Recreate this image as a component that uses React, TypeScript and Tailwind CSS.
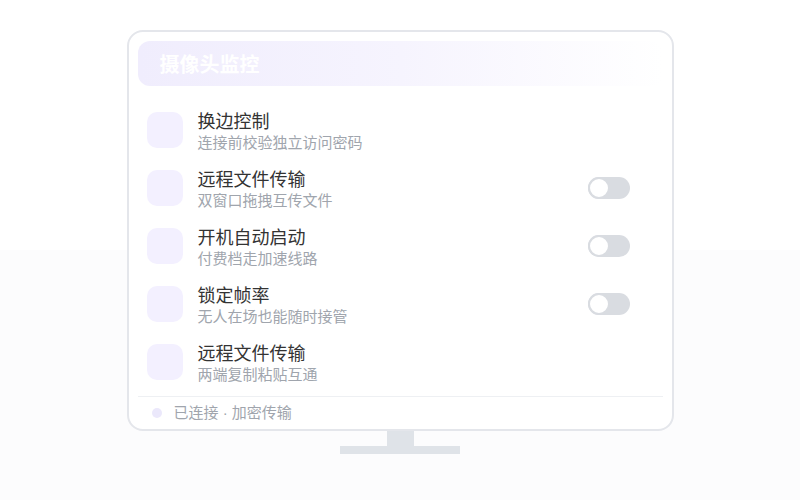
const rows = [
  { title: "换边控制", sub: "连接前校验独立访问密码", toggle: false },
  { title: "远程文件传输", sub: "双窗口拖拽互传文件", toggle: true },
  { title: "开机自动启动", sub: "付费档走加速线路", toggle: true },
  { title: "锁定帧率", sub: "无人在场也能随时接管", toggle: true },
  { title: "远程文件传输", sub: "两端复制粘贴互通", toggle: false },
];

function Toggle() {
  return (
    <div className="w-[42px] h-[22px] rounded-full bg-[#d9dce1] relative shrink-0">
      <div className="absolute left-0 top-0 w-[22px] h-[22px] rounded-full bg-white border-2 border-[#d9dce1]" />
    </div>
  );
}

export default function App() {
  return (
    <div
      className="w-[800px] h-[500px] flex flex-col items-center pt-[30px] bg-[linear-gradient(to_bottom,#ffffff_50%,#fcfcfd_50%)]"
      style={{ fontFamily: '"Noto Sans CJK SC", "Noto Sans", sans-serif' }}
    >
      <div className="w-[547px] h-[401px] border-2 border-[#e4e6eb] rounded-[16px] bg-white p-[9px] pb-0 flex flex-col">
        <div className="h-[45px] shrink-0 rounded-[12px] pl-[22px] flex items-center text-[20px] font-semibold text-white bg-gradient-to-r from-[#f0edfd] via-[#f6f4fe] to-white/0">
          摄像头监控
        </div>

        <div className="mt-[22px] flex flex-col gap-[14px] pl-[9px] pr-[33px]">
          {rows.map((r, i) => (
            <div key={i} className="flex items-center gap-[15px] h-[44px]">
              <div className="w-[36px] h-[36px] rounded-[10px] bg-[#f3f0ff] shrink-0" />
              <div className="flex-1 flex flex-col">
                <div className="text-[18px] leading-[24px] text-[#333333]">{r.title}</div>
                <div className="text-[15px] leading-[20px] text-[#a0a5ad]">{r.sub}</div>
              </div>
              {r.toggle && <Toggle />}
            </div>
          ))}
        </div>

        <div className="mt-[12px] border-t border-[#eef0f3] h-[33px] flex items-center pl-[14px] gap-[12px]">
          <span className="w-[10px] h-[10px] rounded-full bg-[#ebe8fb]" />
          <span className="text-[15px] text-[#a0a5ad]">
            已连接<span className="font-['Liberation_Sans']"> · </span>加密传输
          </span>
        </div>
      </div>
      <div className="w-[27px] h-[15px] bg-[#dfe3e8]" />
      <div className="w-[120px] h-[8px] bg-[#dfe3e8]" />
    </div>
  );
}
